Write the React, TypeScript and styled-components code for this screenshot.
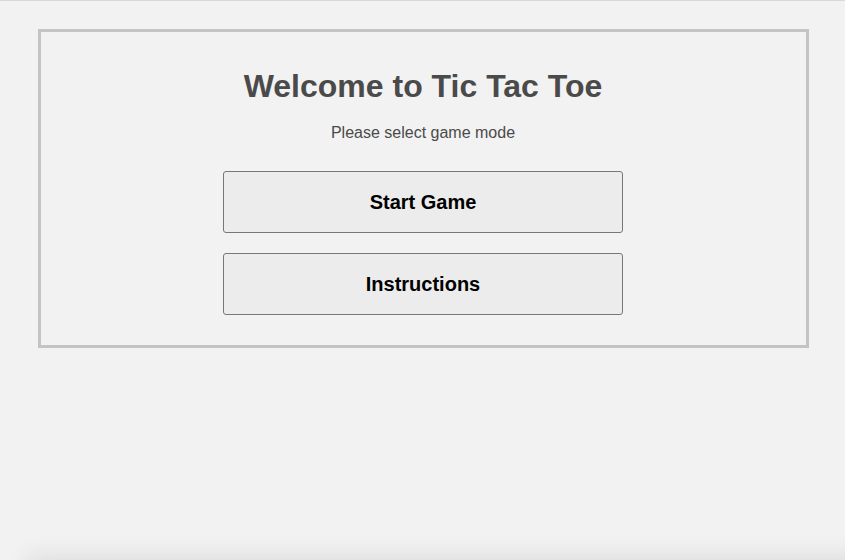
import React from "react";
import styled, { createGlobalStyle } from "styled-components";

const GlobalStyle = createGlobalStyle`
  html, body {
    margin: 0;
    padding: 0;
    background: #f2f2f2;
    font-family: "Liberation Sans", Arial, Helvetica, sans-serif;
  }
  body {
    border-top: 1px solid #d9d9d9;
    min-height: 559px;
    overflow: hidden;
  }
`;

const Page = styled.main`
  display: flex;
  flex-direction: column;
  padding: 28px 36px 0 38px;
`;

const Card = styled.section`
  box-sizing: border-box;
  width: 771px;
  border: 3px solid #c4c4c4;
  display: flex;
  flex-direction: column;
  align-items: center;
  padding: 36px 1px 30px 0;
`;

const Title = styled.h1`
  margin: 0;
  font-size: 32px;
  line-height: 37px;
  font-weight: 700;
  color: #4a4a4a;
`;

const Subtitle = styled.p`
  margin: 19px 0 29px;
  font-size: 16px;
  line-height: 18px;
  color: #4a4a4a;
`;

const Buttons = styled.div`
  display: flex;
  flex-direction: column;
  gap: 20px;
`;

const ModeButton = styled.button`
  box-sizing: border-box;
  width: 400px;
  height: 62px;
  border: 1px solid #777777;
  border-radius: 3px;
  background: #ececec;
  color: #000000;
  font-family: "Liberation Sans", Arial, Helvetica, sans-serif;
  font-size: 20px;
  font-weight: 700;
  cursor: pointer;
`;

const BottomShade = styled.div`
  position: fixed;
  left: 30px;
  right: -20px;
  bottom: -40px;
  height: 40px;
  box-shadow: 0 0 24px 4px rgba(0, 0, 0, 0.09);
  background: #e6e6e6;
`;

export default function App() {
  return (
    <>
      <GlobalStyle />
      <Page>
        <Card>
          <Title>Welcome to Tic Tac Toe</Title>
          <Subtitle>Please select game mode</Subtitle>
          <Buttons>
            <ModeButton>Start Game</ModeButton>
            <ModeButton>Instructions</ModeButton>
          </Buttons>
        </Card>
      </Page>
      <BottomShade />
    </>
  );
}
